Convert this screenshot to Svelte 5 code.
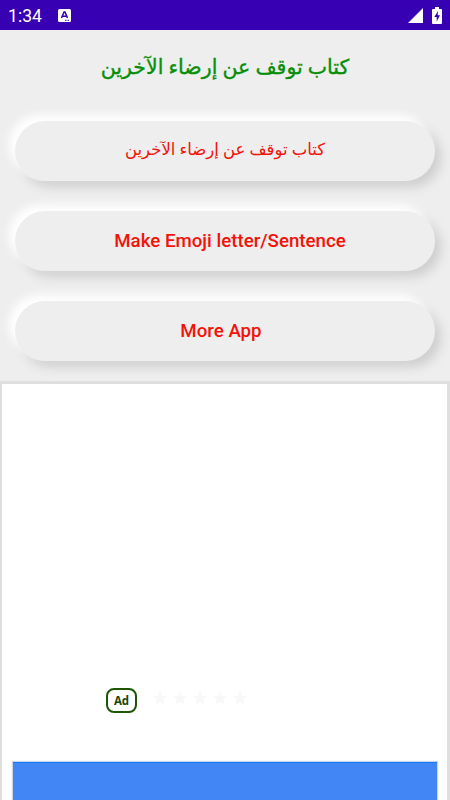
<script>
  let title = 'كتاب توقف عن إرضاء الآخرين';

  let buttons = [
      { id: 1, label: title, arabic: true },
      { id: 2, label: 'Make Emoji letter/Sentence', arabic: false },
      { id: 3, label: 'More App', arabic: false },
  ];

  let stars = [1, 2, 3, 4, 5];
</script>

<style>
  :global(body) {
      margin: 0;
      background: #eee;
  }

  .screen {
      display: flex;
      flex-direction: column;
      width: 450px;
      height: 800px;
      overflow: hidden;
      background: #eee;
      font-family: Roboto, "DejaVu Sans", sans-serif;
  }

  .status-bar {
      display: flex;
      align-items: center;
      box-sizing: border-box;
      flex: none;
      height: 30px;
      padding: 0 8px;
      background: #3700b3;
      color: #fff;
  }

  .time {
      width: 50px;
      font-size: 17.6px;
      line-height: 30px;
      padding-top: 1px;
  }

  .status-icons {
      display: flex;
      align-items: center;
      gap: 9px;
      margin-left: auto;
  }

  svg {
      display: block;
  }

  h1 {
      display: flex;
      align-items: center;
      justify-content: center;
      flex: none;
      height: 74px;
      margin: 0 0 17px;
      color: #068f06;
      font-size: 20.5px;
      font-weight: normal;
      -webkit-text-stroke: 0.35px #068f06;
  }

  .menu {
      display: flex;
      flex-direction: column;
      gap: 30px;
      flex: none;
      padding: 0 15px;
  }

  button {
      height: 60px;
      padding: 0;
      border: none;
      border-radius: 30px;
      background: #eee;
      box-shadow: -6px -6px 10px #fff, 6px 6px 11px #cecece;
      color: #f41208;
      font-family: inherit;
      font-size: 18.7px;
      font-weight: 500;
  }

  .latin {
      padding-left: 10px;
  }

  .more {
      padding: 0 8px 0 0;
  }

  .arabic {
      padding-bottom: 3px;
      font-size: 16.5px;
      font-weight: normal;
  }

  .ad {
      display: flex;
      flex-direction: column;
      box-sizing: border-box;
      flex: 1;
      margin-top: 20px;
      padding: 304px 10px 0 11px;
      border: solid #dfdfdf;
      border-width: 3px 3px 0 2px;
      background: #fff;
  }

  .ad-info {
      display: flex;
      align-items: center;
      height: 25px;
      padding-left: 93px;
  }

  .badge {
      box-sizing: border-box;
      width: 31px;
      height: 25px;
      margin-right: 15px;
      border: 2px solid #1d5706;
      border-radius: 8px;
      color: #174606;
      font-family: "Open Sans", sans-serif;
      font-size: 11.5px;
      font-weight: bold;
      line-height: 22px;
      text-align: center;
  }

  .stars {
      display: flex;
      gap: 4px;
      margin-top: -5px;
  }

  .cta {
      flex: 1;
      margin: 49px 0 0;
      border-top: 1px solid #127bf5;
      background: #4285f4;
      box-shadow: 0 0 1px 1px #ccd5e8;
  }
</style>

<div class="screen">
  <div class="status-bar">
      <span class="time">1:34</span>
      <svg width="13" height="13" viewBox="0 0 13 13">
          <rect width="13" height="13" rx="1.5" fill="#fff" />
          <path d="M3.5 9 6 3h1l2.500 6M4.500 7.200h4" fill="none" stroke="#3700b3" stroke-width="1.500" />
          <path d="M7 11.300h4" stroke="#3700b3" stroke-width="1" stroke-dasharray="1 .5" />
      </svg>
      <div class="status-icons">
          <svg width="15" height="15" viewBox="0 0 15 15">
              <path d="M15 0v15H0z" fill="#fff" />
          </svg>
          <svg width="10" height="17" viewBox="0 0 10 17">
              <path d="M3 0h4v2h2q1 0 1 1v13q0 1-1 1H1q-1 0-1-1V3q0-1 1-1h2z" fill="#fff" />
              <path d="M6 4 2.300 10h2.400v4.500L8 8.300H5.700z" fill="#3700b3" />
          </svg>
      </div>
  </div>

  <h1 dir="rtl">{title}</h1>

  <div class="menu">
      {#each buttons as button (button.id)}
          <button
              class:arabic={button.arabic}
              class:latin={!button.arabic}
              class:more={button.id === 3}
              dir={button.arabic ? 'rtl' : 'ltr'}
          >{button.label}</button>
      {/each}
  </div>

  <div class="ad">
      <div class="ad-info">
          <span class="badge">Ad</span>
          <div class="stars">
              {#each stars as star (star)}
                  <svg width="16" height="16" viewBox="0 0 16 16">
                      <path d="M8 .5l2 5.200 5.500.4-4.200 3.500 1.400 5.400L8 12l-4.700 3 1.400-5.400L.5 6.100 6 5.700z" fill="#f8f8f8" />
                  </svg>
              {/each}
          </div>
      </div>
      <div class="cta"></div>
  </div>
</div>
